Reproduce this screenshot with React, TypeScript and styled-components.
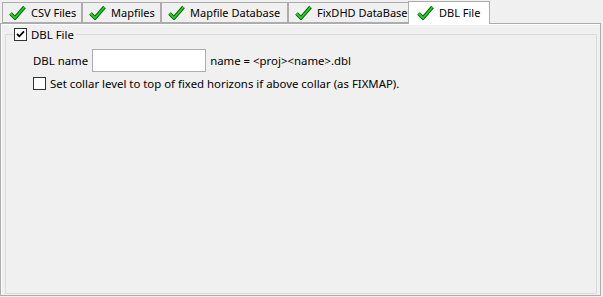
import React from "react"
import styled, { createGlobalStyle } from "styled-components"

const GlobalStyle = createGlobalStyle`
  html, body {
    margin: 0;
    padding: 0;
    background: #f0f0f0;
    font-family: "Segoe UI", "Noto Sans", "Liberation Sans", sans-serif;
    font-size: 11.4px;
    color: #000;
  }
`

const Window = styled.div`
  width: 603px;
  height: 297px;
  display: flex;
  flex-direction: column;
  box-sizing: border-box;
`

const TabStrip = styled.div`
  display: flex;
  align-items: flex-end;
  height: 23px;
  padding-left: 2px;
  position: relative;
  z-index: 1;
`

const Tab = styled.div<{ active?: boolean; w: number }>`
  box-sizing: border-box;
  flex: none;
  width: ${({ w }) => w}px;
  height: ${({ active }) => (active ? "23px" : "21px")};
  margin-bottom: ${({ active }) => (active ? "-1px" : "0")};
  margin-left: ${({ active }) => (active ? "-1px" : "0")};
  display: flex;
  align-items: center;
  gap: 5px;
  font-size: 11px;
  padding-left: ${({ active }) => (active ? "8px" : "6px")};
  padding-bottom: ${({ active }) => (active ? "2px" : "0")};
  background: ${({ active }) => (active ? "#ffffff" : "#f0f0f0")};
  border: 1px solid #acacac;
  border-bottom: ${({ active }) => (active ? "none" : "1px solid #acacac")};
  & + & {
    border-left: ${({ active }) => (active ? "1px solid #acacac" : "none")};
  }
  white-space: nowrap;
  svg {
    flex: none;
  }
`

const Panel = styled.div`
  flex: 1;
  margin: 0 2px 1px 0;
  border: 1px solid #acacac;
  box-shadow: inset 1px 1px 0 #ffffff;
  background: #f0f0f0;
  padding: 3px 3px 1px 4px;
  display: flex;
`

const Group = styled.fieldset`
  flex: 1;
  margin: 0;
  border: 1px solid #dcdcdc;
  padding: 0 0 0 27px;
  min-width: 0;
`

const Legend = styled.legend`
  padding: 0 2px 0 0;
  margin-left: -19px;
  display: flex;
  align-items: center;
  gap: 4px;
  height: 14px;
`

const Box = styled.span`
  box-sizing: border-box;
  width: 13px;
  height: 13px;
  border: 1px solid #333;
  background: #fff;
  display: inline-flex;
  align-items: center;
  justify-content: center;
  flex: none;
`

const Row = styled.div`
  display: flex;
  align-items: center;
  gap: 4px;
`

const NameRow = styled(Row)`
  margin-top: 8px;
  height: 23px;
`

const OptionRow = styled(Row)`
  margin-top: 4px;
`

const TextInput = styled.div`
  box-sizing: border-box;
  width: 114px;
  height: 23px;
  background: #fff;
  border: 1px solid #abadb3;
`

function TickMark() {
  return (
    <svg width="9" height="8" viewBox="0 0 9 8">
      <path d="M1 4 L3.3 6.3 L8 1.4" fill="none" stroke="#000" strokeWidth="1.8" />
    </svg>
  )
}

function GreenCheck() {
  return (
    <svg width="17" height="15" viewBox="0 0 17 15">
      <path
        d="M1.5 8.5 L6 13 L15.5 2"
        fill="none"
        stroke="#0b5a0b"
        strokeWidth="3.6"
        strokeLinejoin="miter"
      />
      <path
        d="M1.5 8.5 L6 13 L15.5 2"
        fill="none"
        stroke="#1ed81e"
        strokeWidth="1.8"
        strokeLinejoin="miter"
      />
    </svg>
  )
}

const tabs = [
  { label: "CSV Files", w: 80 },
  { label: "Mapfiles", w: 79 },
  { label: "Mapfile Database", w: 127 },
  { label: "FixDHD DataBase", w: 121 },
  { label: "DBL File", w: 82, active: true },
]

export default function App() {
  return (
    <Window>
      <GlobalStyle />
      <TabStrip>
        {tabs.map((t) => (
          <Tab key={t.label} active={t.active} w={t.w}>
            <GreenCheck />
            {t.label}
          </Tab>
        ))}
      </TabStrip>
      <Panel>
        <Group>
          <Legend>
            <Box>
              <TickMark />
            </Box>
            DBL File
          </Legend>
          <NameRow>
            DBL name
            <TextInput />
            name = &lt;proj&gt;&lt;name&gt;.dbl
          </NameRow>
          <OptionRow>
            <Box />
            Set collar level to top of fixed horizons if above collar (as FIXMAP).
          </OptionRow>
        </Group>
      </Panel>
    </Window>
  )
}
